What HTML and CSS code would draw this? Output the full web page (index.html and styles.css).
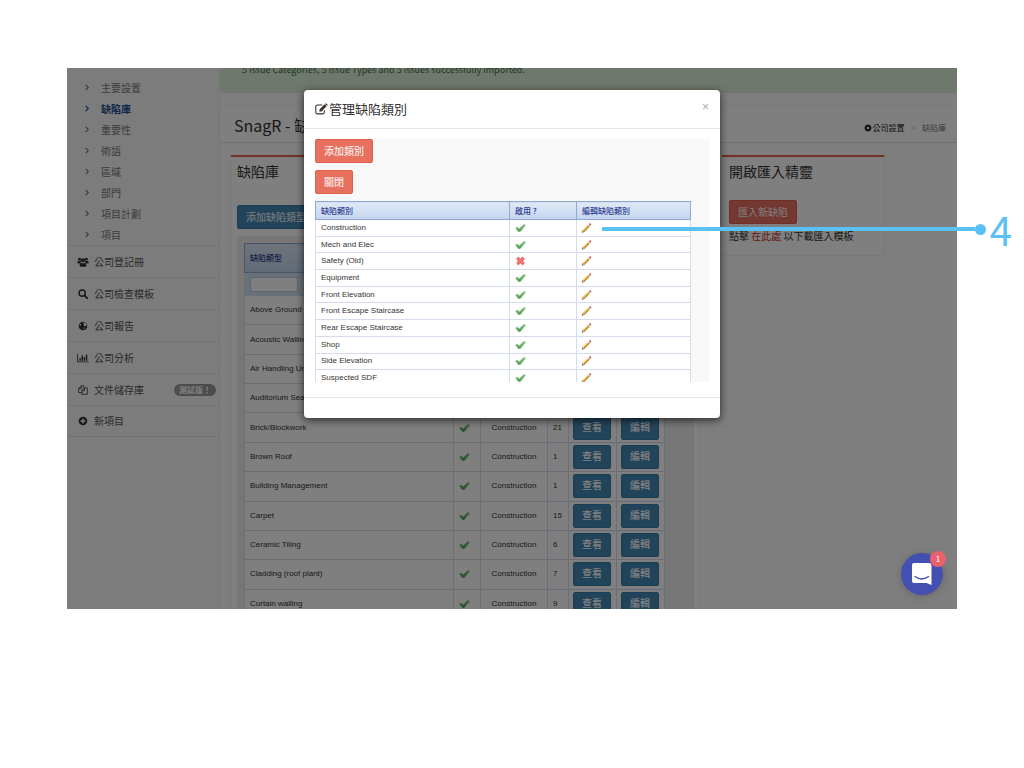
FILE: index.html
```
<!DOCTYPE html>
<html lang="zh-Hant">

<head>
    <meta charset="UTF-8">
    <meta name="viewport" content="width=device-width, initial-scale=1.0">
    <title>SnagR - 缺陷庫</title>
    <link rel="stylesheet" href="styles.css">
</head>

<body>
    <!-- icons -->
    <svg class="sprite" aria-hidden="true">
        <linearGradient id="green" x1="0" y1="0" x2="0" y2="1">
            <stop offset="0" stop-color="#8cc98a" />
            <stop offset="1" stop-color="#4f9a50" />
        </linearGradient>
        <symbol id="check" viewBox="0 0 16 14">
            <path d="M1 7.300Q1.600 5.300 4 6.200L6 8 12.300 2.200Q14.600 1.200 15.200 3.400L8.200 11.600Q6.200 13.400 4.400 11.600Z" fill="url(#green)" stroke="#68ab66" stroke-width=".6" stroke-linejoin="round" />
        </symbol>
        <symbol id="cross" viewBox="1 1 14 14">
            <path d="M3.500 3.500 12.500 12.500M12.500 3.500 3.500 12.500" stroke="#dc4d4d" stroke-width="4.400" />
            <path d="M3.500 3.500 12.500 12.500M12.500 3.500 3.500 12.500" stroke="#f07c78" stroke-width="2.400" />
        </symbol>
        <symbol id="pencil" viewBox="0 0 16 16">
            <path d="M1 15 2.200 11.300 4.700 13.800Z" fill="#e8cfa8" stroke="#6b5b48" stroke-width=".7" />
            <path d="M1 15 1.600 13.200 2.800 14.400Z" fill="#333" />
            <path d="M2.200 11.300 10.600 2.900 13.100 5.400 4.700 13.800Z" fill="#e9b64a" />
            <path d="M3.900 13 12.300 4.600 13.100 5.400 4.700 13.800Z" fill="#a8702a" />
            <path d="M10.600 2.900 12 1.500 14.500 4 13.100 5.400Z" fill="#c9cdd3" />
            <path d="M12 1.500 13 .6Q15.800.3 15.500 3L14.500 4Z" fill="#c0403a" />
        </symbol>
        <symbol id="chevron" viewBox="0 0 8 8">
            <path d="M2.500 1 5.500 4 2.500 7" fill="none" stroke="currentColor" stroke-width="1.300" />
        </symbol>
        <symbol id="users" viewBox="0 0 16 14">
            <circle cx="3.300" cy="3" r="2" />
            <circle cx="12.700" cy="3" r="2" />
            <circle cx="8" cy="4.500" r="2.900" />
            <path d="M.3 9V6.500Q.5 5.200 1.500 5.200 3.200 6.200 4.800 5.400 4.800 7 5.600 7.700 4 7.900 3.200 9ZM15.700 9V6.500Q15.500 5.200 14.500 5.200 12.800 6.200 11.200 5.400 11.200 7 10.400 7.700 12 7.900 12.800 9ZM3.200 12.200Q3 8.200 5.300 7.900 8 9.800 10.700 7.900 13 8.200 12.800 12.200 12.600 13.600 11 13.600H5Q3.400 13.600 3.200 12.200Z" />
        </symbol>
        <symbol id="search" viewBox="0 0 14 14">
            <circle cx="5.800" cy="5.800" r="4.300" fill="none" stroke="currentColor" stroke-width="2" />
            <path d="M9 9 12.800 12.800" stroke="currentColor" stroke-width="2.400" stroke-linecap="round" />
        </symbol>
        <symbol id="globe" viewBox="0 0 14 14">
            <circle cx="7" cy="7" r="6" />
            <path d="M7 2.500 10 2.200 12 5 11.500 7 9.500 7.500 7.500 6 8.500 4.500ZM3 4 4.500 4.500 3.500 6.500 2.200 7ZM7.500 9 9.500 9.500 8 11.800Z" fill="#f8f8f8" />
        </symbol>
        <symbol id="chart" viewBox="0 0 16 14">
            <path d="M0 1H1.100V12H16V13.100H0ZM3 7.500H5V11H3ZM6 3.500H8V11H6ZM9 5.500H11V11H9ZM12 2.500H14V11H12Z" />
        </symbol>
        <symbol id="files" viewBox="0 0 14 14">
            <path d="M5.500 10.500H1V5L4.500 1.200H8V4M1 5H4.500V1.200M5.500 13V7.800L9 4H13V13ZM5.500 7.800H9V4" fill="none" stroke="currentColor" stroke-width="1.100" stroke-linejoin="round" />
        </symbol>
        <symbol id="plus" viewBox="0 0 14 14">
            <circle cx="7" cy="7" r="6" />
            <path d="M7 3.500V10.500M3.500 7H10.500" stroke="#f8f8f8" stroke-width="2" />
        </symbol>
        <symbol id="cog" viewBox="0 0 14 14">
            <circle cx="7" cy="7" r="3.600" fill="none" stroke="currentColor" stroke-width="3" />
            <path d="M7 .8V3M7 11V13.200M.8 7H3M11 7H13.200M2.600 2.600 4.200 4.200M9.800 9.800 11.400 11.400M2.600 11.400 4.200 9.800M9.800 4.200 11.400 2.600" stroke="currentColor" stroke-width="2.600" />
        </symbol>
        <symbol id="edit" viewBox="0 0 16 14">
            <path d="M11.500 8.500V11Q11.500 13 9.500 13H3Q1 13 1 11V4Q1 2 3 2H9" fill="none" stroke="currentColor" stroke-width="1.300" />
            <path d="M5.500 7.500 11.800 1.200 14.300 3.700 8 10H5.500ZM12.400.7 13 .2Q13.500-.1 14 .3L15.300 1.600Q15.700 2.100 15.300 2.600L14.800 3.100Z" />
        </symbol>
    </svg>

    <div class="frame">
        <div class="page">
            <nav class="sidebar">
                <ul class="submenu">
                    <li><a href="#"><svg><use href="#chevron" /></svg>主要設置</a></li>
                    <li><a href="#" class="active"><svg><use href="#chevron" /></svg>缺陷庫</a></li>
                    <li><a href="#"><svg><use href="#chevron" /></svg>重要性</a></li>
                    <li><a href="#"><svg><use href="#chevron" /></svg>術語</a></li>
                    <li><a href="#"><svg><use href="#chevron" /></svg>區域</a></li>
                    <li><a href="#"><svg><use href="#chevron" /></svg>部門</a></li>
                    <li><a href="#"><svg><use href="#chevron" /></svg>項目計劃</a></li>
                    <li><a href="#"><svg><use href="#chevron" /></svg>項目</a></li>
                </ul>
                <ul class="menu">
                    <li><a href="#"><svg><use href="#users" /></svg>公司登記冊</a></li>
                    <li><a href="#"><svg><use href="#search" /></svg>公司檢查模板</a></li>
                    <li><a href="#"><svg><use href="#globe" /></svg>公司報告</a></li>
                    <li><a href="#"><svg><use href="#chart" /></svg>公司分析</a></li>
                    <li><a href="#"><svg><use href="#files" /></svg>文件儲存庫<span class="tag">測試版！</span></a></li>
                    <li><a href="#"><svg><use href="#plus" /></svg>新項目</a></li>
                </ul>
            </nav>

            <main>
                <div class="alert">5 Issue Categories, 5 Issue Types and 5 issues successfully imported.</div>
                <header class="title-bar">
                    <h1>SnagR - 缺陷庫</h1>
                    <div class="breadcrumb">
                        <a href="#"><svg><use href="#cog" /></svg>公司設置</a>
                        <span class="sep">&gt;</span>
                        <span>缺陷庫</span>
                    </div>
                </header>
                <div class="panels">
                    <section class="panel library">
                        <h2>缺陷庫</h2>
                        <button class="btn blue">添加缺陷類型</button>
                        <div class="grid-wrap">
                            <table class="grid types">
                                <colgroup>
                                    <col>
                                    <col class="c-check">
                                    <col class="c-cat">
                                    <col class="c-num">
                                    <col class="c-btn">
                                    <col class="c-btn">
                                </colgroup>
                                <thead>
                                    <tr><th>缺陷類型</th><th></th><th></th><th></th><th></th><th></th></tr>
                                    <tr class="filter"><td><input type="text" aria-label="缺陷類型"></td><td></td><td></td><td></td><td></td><td></td></tr>
                                </thead>
                                <tbody>
                                    <tr><td>Above Ground</td><td class="mark"><svg><use href="#check" /></svg></td><td class="cat">Construction</td><td>3</td><td class="act"><button class="btn blue">查看</button></td><td class="act"><button class="btn blue">編輯</button></td></tr>
                                    <tr><td>Acoustic Walling</td><td class="mark"><svg><use href="#check" /></svg></td><td class="cat">Construction</td><td>1</td><td class="act"><button class="btn blue">查看</button></td><td class="act"><button class="btn blue">編輯</button></td></tr>
                                    <tr><td>Air Handling Unit</td><td class="mark"><svg><use href="#check" /></svg></td><td class="cat">Construction</td><td>2</td><td class="act"><button class="btn blue">查看</button></td><td class="act"><button class="btn blue">編輯</button></td></tr>
                                    <tr><td>Auditorium Seating</td><td class="mark"><svg><use href="#check" /></svg></td><td class="cat">Construction</td><td>1</td><td class="act"><button class="btn blue">查看</button></td><td class="act"><button class="btn blue">編輯</button></td></tr>
                                    <tr><td>Brick/Blockwork</td><td class="mark"><svg><use href="#check" /></svg></td><td class="cat">Construction</td><td>21</td><td class="act"><button class="btn blue">查看</button></td><td class="act"><button class="btn blue">編輯</button></td></tr>
                                    <tr><td>Brown Roof</td><td class="mark"><svg><use href="#check" /></svg></td><td class="cat">Construction</td><td>1</td><td class="act"><button class="btn blue">查看</button></td><td class="act"><button class="btn blue">編輯</button></td></tr>
                                    <tr><td>Building Management</td><td class="mark"><svg><use href="#check" /></svg></td><td class="cat">Construction</td><td>1</td><td class="act"><button class="btn blue">查看</button></td><td class="act"><button class="btn blue">編輯</button></td></tr>
                                    <tr><td>Carpet</td><td class="mark"><svg><use href="#check" /></svg></td><td class="cat">Construction</td><td>15</td><td class="act"><button class="btn blue">查看</button></td><td class="act"><button class="btn blue">編輯</button></td></tr>
                                    <tr><td>Ceramic Tiling</td><td class="mark"><svg><use href="#check" /></svg></td><td class="cat">Construction</td><td>6</td><td class="act"><button class="btn blue">查看</button></td><td class="act"><button class="btn blue">編輯</button></td></tr>
                                    <tr><td>Cladding (roof plant)</td><td class="mark"><svg><use href="#check" /></svg></td><td class="cat">Construction</td><td>7</td><td class="act"><button class="btn blue">查看</button></td><td class="act"><button class="btn blue">編輯</button></td></tr>
                                    <tr><td>Curtain walling</td><td class="mark"><svg><use href="#check" /></svg></td><td class="cat">Construction</td><td>9</td><td class="act"><button class="btn blue">查看</button></td><td class="act"><button class="btn blue">編輯</button></td></tr>
                                </tbody>
                            </table>
                        </div>
                    </section>

                    <section class="panel wizard">
                        <h2>開啟匯入精靈</h2>
                        <button class="btn red">匯入新缺陷</button>
                        <p>點擊 <a href="#">在此處</a> 以下載匯入模板</p>
                    </section>
                </div>
            </main>
        </div>

        <div class="backdrop">
            <div class="modal" role="dialog" aria-labelledby="modal-title">
                <div class="modal-header">
                    <h3 id="modal-title"><svg><use href="#edit" /></svg>管理缺陷類別</h3>
                    <button class="close" aria-label="Close">×</button>
                </div>
                <div class="modal-body">
                    <button class="btn red">添加類別</button>
                    <button class="btn red">關閉</button>
                    <table class="grid categories">
                        <colgroup>
                            <col>
                            <col class="c-on">
                            <col class="c-edit">
                        </colgroup>
                        <thead>
                            <tr><th>缺陷類別</th><th>啟用 ?</th><th>編輯缺陷類別</th></tr>
                        </thead>
                        <tbody>
                            <tr><td>Construction</td><td><svg><use href="#check" /></svg></td><td><svg><use href="#pencil" /></svg></td></tr>
                            <tr><td>Mech and Elec</td><td><svg><use href="#check" /></svg></td><td><svg><use href="#pencil" /></svg></td></tr>
                            <tr><td>Safety (Old)</td><td><svg><use href="#cross" /></svg></td><td><svg><use href="#pencil" /></svg></td></tr>
                            <tr><td>Equipment</td><td><svg><use href="#check" /></svg></td><td><svg><use href="#pencil" /></svg></td></tr>
                            <tr><td>Front Elevation</td><td><svg><use href="#check" /></svg></td><td><svg><use href="#pencil" /></svg></td></tr>
                            <tr><td>Front Escape Staircase</td><td><svg><use href="#check" /></svg></td><td><svg><use href="#pencil" /></svg></td></tr>
                            <tr><td>Rear Escape Staircase</td><td><svg><use href="#check" /></svg></td><td><svg><use href="#pencil" /></svg></td></tr>
                            <tr><td>Shop</td><td><svg><use href="#check" /></svg></td><td><svg><use href="#pencil" /></svg></td></tr>
                            <tr><td>Side Elevation</td><td><svg><use href="#check" /></svg></td><td><svg><use href="#pencil" /></svg></td></tr>
                            <tr><td>Suspected SDF</td><td><svg><use href="#check" /></svg></td><td><svg><use href="#pencil" /></svg></td></tr>
                        </tbody>
                    </table>
                </div>
                <div class="modal-footer"></div>
            </div>
        </div>

        <button class="chat" aria-label="Chat">
            <svg viewBox="0 0 22 24">
                <path d="M3 1H18Q20.500 1 20.500 3.500V23L15.500 21H3Q1 21 1 19V3Q1 1 3 1Z" fill="#fff" />
                <path d="M4 14.500Q10.700 19.500 17.500 14.500" fill="none" stroke="#4350b0" stroke-width="1.300" stroke-linecap="round" />
            </svg>
            <span class="count">1</span>
        </button>
    </div>

    <div class="callout">
        <span class="line"></span>
        <span class="dot"></span>
        <span class="num">4</span>
    </div>
</body>

</html>
```
FILE: styles.css
```
* {
    box-sizing: border-box;
    margin: 0;
    padding: 0;
}

body {
    position: relative;
    padding: 68px 67px 0;
    background: #fff;
    color: #333;
    font: 10px/16px "Noto Sans CJK TC", sans-serif;
}

a {
    color: inherit;
    text-decoration: none;
}

ul {
    list-style: none;
}

table {
    border-collapse: collapse;
    table-layout: fixed;
}

button {
    font-family: inherit;
    border: 0;
    cursor: pointer;
}

svg {
    fill: currentColor;
    flex: none;
}

.sprite {
    position: absolute;
    width: 0;
    height: 0;
}

.frame {
    position: relative;
    height: calc(100vh - 227px);
    overflow: hidden;
}

.page {
    display: flex;
}

/* sidebar */
.sidebar {
    width: 153px;
    min-height: 100vh;
    padding-top: 9px;
    background: #f8f8f8;
    border-right: 1px solid #eee;
}

.submenu a {
    display: flex;
    align-items: center;
    height: 21px;
    padding-left: 16px;
    color: #777;
}

.submenu svg {
    width: 8px;
    height: 7px;
    margin-right: 10px;
}

.submenu .active {
    color: #1d4f91;
    font-weight: bold;
}

.menu a {
    display: flex;
    align-items: center;
    height: 32px;
    padding: 0 3px 0 10px;
    border-top: 1px solid #e4e4e4;
    color: #555;
}

.menu li:last-child a {
    border-bottom: 1px solid #e4e4e4;
}

.menu svg {
    width: 12px;
    height: 10px;
    margin-right: 5px;
    color: #333;
}

.tag {
    margin-left: auto;
    padding: 0 5px;
    border-radius: 6px;
    background: #999;
    color: #fff;
    font-size: 8px;
    font-weight: bold;
    line-height: 12px;
}

/* main */
main {
    flex: 1;
    min-width: 0;
    background: #fcfcfc;
}

.alert {
    height: 25px;
    padding-left: 22px;
    border-radius: 0 0 3px 3px;
    background: #dff0d8;
    color: #3c763d;
    font-size: 9px;
    line-height: 4px;
}

.title-bar {
    display: flex;
    align-items: center;
    justify-content: space-between;
    height: 37px;
    margin-top: 13px;
    padding: 1px 11px 0 14px;
    border-top: 1px solid #f6f6f6;
    border-bottom: 1px solid #e0e0e0;
    background: #fff;
}

h1 {
    font-size: 16px;
    font-weight: normal;
    line-height: 24px;
}

.breadcrumb {
    display: flex;
    align-items: center;
    padding-top: 6px;
    font-size: 8px;
    color: #777;
}

.breadcrumb a {
    display: flex;
    align-items: center;
    color: #222;
}

.breadcrumb svg {
    width: 8px;
    height: 8px;
    margin-right: 1px;
}

.breadcrumb .sep {
    margin: 0 7px 0 6px;
    color: #bbb;
}

.panels {
    display: flex;
    align-items: flex-start;
    gap: 21px;
    padding: 12px 72px 0 10px;
}

.panel {
    border: 1px solid #f0f0f0;
    border-top: 2px solid #e7604a;
    border-radius: 2px;
    background: #fff;
}

.library {
    flex: 1;
    padding: 2px 5px 0 6px;
}

.wizard {
    width: 164px;
    padding: 2px 7px 11px;
}

h2 {
    font-size: 14px;
    font-weight: normal;
    line-height: 24px;
}

.btn {
    display: block;
    height: 24px;
    padding: 0 8px;
    border-radius: 2px;
    color: #fff;
    font-size: 10px;
    line-height: 22px;
    white-space: nowrap;
}

.blue {
    background: #4488b6;
    border: 1px solid #397ba8;
}

.red {
    background: #e7705e;
    border: 1px solid #e0604c;
}

.library > .btn {
    margin-top: 22px;
}

.wizard .btn {
    margin-top: 17px;
}

.wizard p {
    margin-top: 4px;
    white-space: nowrap;
}

.wizard p a {
    color: #c9302c;
}

/* tables */
.grid {
    border: 1px solid #8fa9d3;
    background: #fff;
    font: 8px/12px "Liberation Sans", "Noto Sans CJK TC", sans-serif;
}

.grid th {
    padding: 0 5px;
    border: 1px solid #8fa9d3;
    background: linear-gradient(#dfe9f5, #c3d5ef);
    color: #2f3b8f;
    font-family: "Noto Sans CJK TC", sans-serif;
    font-weight: 500;
    text-align: left;
}

.grid td {
    padding: 0 5px;
    border: 1px solid #d5dcee;
}

.grid td svg {
    display: block;
    width: 11px;
    height: 10px;
}

.categories td:last-child {
    padding: 0 4px;
}

.grid-wrap {
    margin-top: 7px;
    padding: 7px 29px 0 7px;
    background: #eee;
}

.types {
    width: 100%;
    height: 376px;
}

.types th {
    height: 29px;
}

.types td {
    height: 29px;
}

.types .filter td {
    height: 23px;
    border-color: #d3e2f0;
    background: #d3e2f0;
}

.filter input {
    display: block;
    width: 48px;
    height: 15px;
    border: 1px solid #b8cfe4;
    background: #fff;
}

.types .cat {
    text-align: center;
}

.types .act {
    padding: 0 4px;
}

.act .btn {
    width: 38px;
    font-weight: 500;
}

.c-check {
    width: 27px;
}

.c-cat {
    width: 67px;
}

.c-num {
    width: 21px;
}

.c-btn {
    width: 48px;
}

/* modal */
.backdrop {
    position: absolute;
    inset: 0;
    background: rgba(0, 0, 0, .5);
}

.modal {
    width: 416px;
    margin: 22px auto 0;
    border-radius: 4px;
    background: #fff;
    box-shadow: 0 2px 8px rgba(0, 0, 0, .7);
}

.modal-header {
    display: flex;
    align-items: center;
    justify-content: space-between;
    height: 39px;
    padding: 0 11px;
    border-bottom: 1px solid #e5e5e5;
}

h3 {
    display: flex;
    align-items: center;
    font-size: 13px;
    font-weight: normal;
}

h3 svg {
    width: 13px;
    height: 12px;
    margin-right: 1px;
}

.close {
    padding-bottom: 4px;
    background: none;
    color: #aaa;
    font: 12px/12px "Liberation Sans", sans-serif;
}

.modal-body {
    height: 243px;
    margin: 10px 11px 15px;
    overflow: hidden;
    background: #f8f8f8;
}

.modal-body .btn {
    margin-bottom: 7px;
}

.categories {
    width: 376px;
    height: 186px;
}

.categories th {
    height: 18px;
}

.categories td {
    height: 16px;
}

.c-on {
    width: 67px;
}

.c-edit {
    width: 114px;
}

.modal-footer {
    height: 21px;
    border-top: 1px solid #e5e5e5;
}

/* chat bubble */
.chat {
    position: absolute;
    right: 14px;
    bottom: 14px;
    width: 42px;
    height: 42px;
    border-radius: 50%;
    background: #4350b0;
    box-shadow: 0 1px 8px rgba(0, 0, 0, .2);
}

.chat svg {
    display: block;
    width: 22px;
    height: 24px;
    margin: 0 auto;
}

.count {
    position: absolute;
    top: -2px;
    right: -3px;
    width: 16px;
    height: 16px;
    border-radius: 50%;
    background: #ec5f6c;
    color: #fff;
    font-size: 8px;
    line-height: 16px;
}

/* callout over the modal */
.callout {
    position: absolute;
    top: 208px;
    left: 602px;
    right: 12px;
    display: flex;
    align-items: center;
    color: #5bc0f5;
}

.line {
    flex: 1;
    height: 4px;
    background: currentColor;
}

.dot {
    width: 11px;
    height: 11px;
    border-radius: 50%;
    background: currentColor;
}

.num {
    margin-left: 4px;
    font: 400 40px/42px "Noto Sans CJK TC", sans-serif;
}
```
